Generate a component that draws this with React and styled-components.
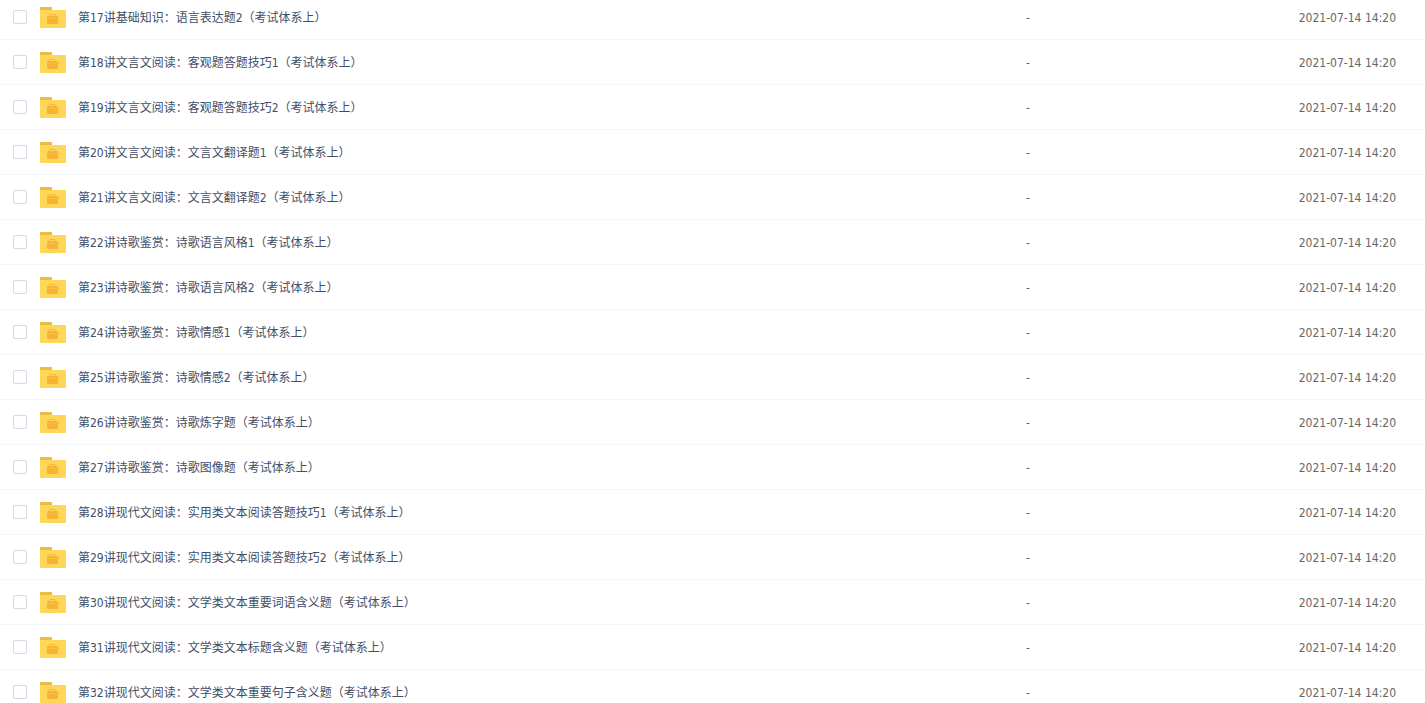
import { useState } from 'react';
import styled, { createGlobalStyle } from 'styled-components';

const GlobalStyle = createGlobalStyle`
  body {
    margin: 0;
    background: #fff;
    color: #424e67;
    font-family: "DejaVu Sans Condensed", "Noto Sans CJK SC", sans-serif;
    font-size: 12px;
  }
`

const Scroller = styled.main`
  height: 100vh;
  overflow: hidden;
`

const FileTable = styled.table`
  width: 100%;
  margin-top: -5px;
  border-collapse: separate;
  border-spacing: 0;
  table-layout: fixed;
`

const Row = styled.tr`
  height: 45px;
  background: ${({ $checked }) => ($checked ? '#f1f5fa' : '#fff')};
`

const Cell = styled.td`
  box-sizing: border-box;
  width: ${({ $width }) => $width || 'auto'};
  padding: 0;
  border-bottom: 1px solid #f2f6fd;
  line-height: 20px;
  white-space: nowrap;
`

const SizeCell = styled(Cell)`
  padding-top: 2px;
  color: #666;
`

const DateCell = styled(SizeCell)`
  padding-left: 2px;
`

const NameBox = styled.div`
  display: flex;
  align-items: center;
  padding-left: 13px;
`

const Checkbox = styled.input`
  appearance: none;
  box-sizing: border-box;
  flex: none;
  width: 14px;
  height: 14px;
  margin: 0 13px 0 0;
  border: 1px solid #d4d9e3;
  border-radius: 2px;
  background: #fff;
  cursor: pointer;

  &:checked {
    border-color: #06a7ff;
    background: #06a7ff;
  }
`

const FolderSvg = styled.svg`
  display: block;
  flex: none;
  width: 26px;
  height: 21px;
  margin-right: 12px;
`

const FileLink = styled.a`
  padding-top: 2px;
  overflow: hidden;
  color: inherit;
  text-decoration: none;
  text-overflow: ellipsis;

  &:hover {
    color: #06a7ff;
  }
`

const files = [
  '第17讲基础知识：语言表达题2（考试体系上）',
  '第18讲文言文阅读：客观题答题技巧1（考试体系上）',
  '第19讲文言文阅读：客观题答题技巧2（考试体系上）',
  '第20讲文言文阅读：文言文翻译题1（考试体系上）',
  '第21讲文言文阅读：文言文翻译题2（考试体系上）',
  '第22讲诗歌鉴赏：诗歌语言风格1（考试体系上）',
  '第23讲诗歌鉴赏：诗歌语言风格2（考试体系上）',
  '第24讲诗歌鉴赏：诗歌情感1（考试体系上）',
  '第25讲诗歌鉴赏：诗歌情感2（考试体系上）',
  '第26讲诗歌鉴赏：诗歌炼字题（考试体系上）',
  '第27讲诗歌鉴赏：诗歌图像题（考试体系上）',
  '第28讲现代文阅读：实用类文本阅读答题技巧1（考试体系上）',
  '第29讲现代文阅读：实用类文本阅读答题技巧2（考试体系上）',
  '第30讲现代文阅读：文学类文本重要词语含义题（考试体系上）',
  '第31讲现代文阅读：文学类文本标题含义题（考试体系上）',
  '第32讲现代文阅读：文学类文本重要句子含义题（考试体系上）',
].map((name) => ({ name, size: '-', modified: '2021-07-14 14:20' }))

const FolderIcon = () => (
  <FolderSvg viewBox="0 0 26 21" aria-hidden="true">
    <path fill="#ecbb45" d="M0 6V1a1 1 0 0 1 1-1h10a1 1 0 0 1 1 1v5z" />
    <path fill="#ffd658" d="M0 3h25a1 1 0 0 1 1 1v16a1 1 0 0 1-1 1H1a1 1 0 0 1-1-1z" />
    <path fill="none" stroke="#f5b436" d="M9.500 9.500V8.500a1 1 0 0 1 1-1h4a1 1 0 0 1 1 1v1" />
    <path fill="#f5b436" d="M8 9h9a1 1 0 0 1 1 1v1H7v-1a1 1 0 0 1 1-1zM7 12h11v4a1 1 0 0 1-1 1H8a1 1 0 0 1-1-1z" />
    <path fill="#fbc02f" d="M7 11h13v1H7z" />
  </FolderSvg>
)

const FileRow = ({ file }) => {
  const [checked, setChecked] = useState(false)

  return (
    <Row $checked={checked}>
      <Cell $width="72%">
        <NameBox>
          <Checkbox
            type="checkbox"
            aria-label={file.name}
            checked={checked}
            onChange={(e) => setChecked(e.target.checked)}
          />
          <FolderIcon />
          <FileLink href="#">{file.name}</FileLink>
        </NameBox>
      </Cell>
      <SizeCell $width="19%">{file.size}</SizeCell>
      <DateCell $width="9%">{file.modified}</DateCell>
    </Row>
  )
}

const App = () => (
  <>
    <GlobalStyle />
    <Scroller>
      <FileTable>
        <tbody>
          {files.map((file) => (
            <FileRow key={file.name} file={file} />
          ))}
        </tbody>
      </FileTable>
    </Scroller>
  </>
)

export default App;
